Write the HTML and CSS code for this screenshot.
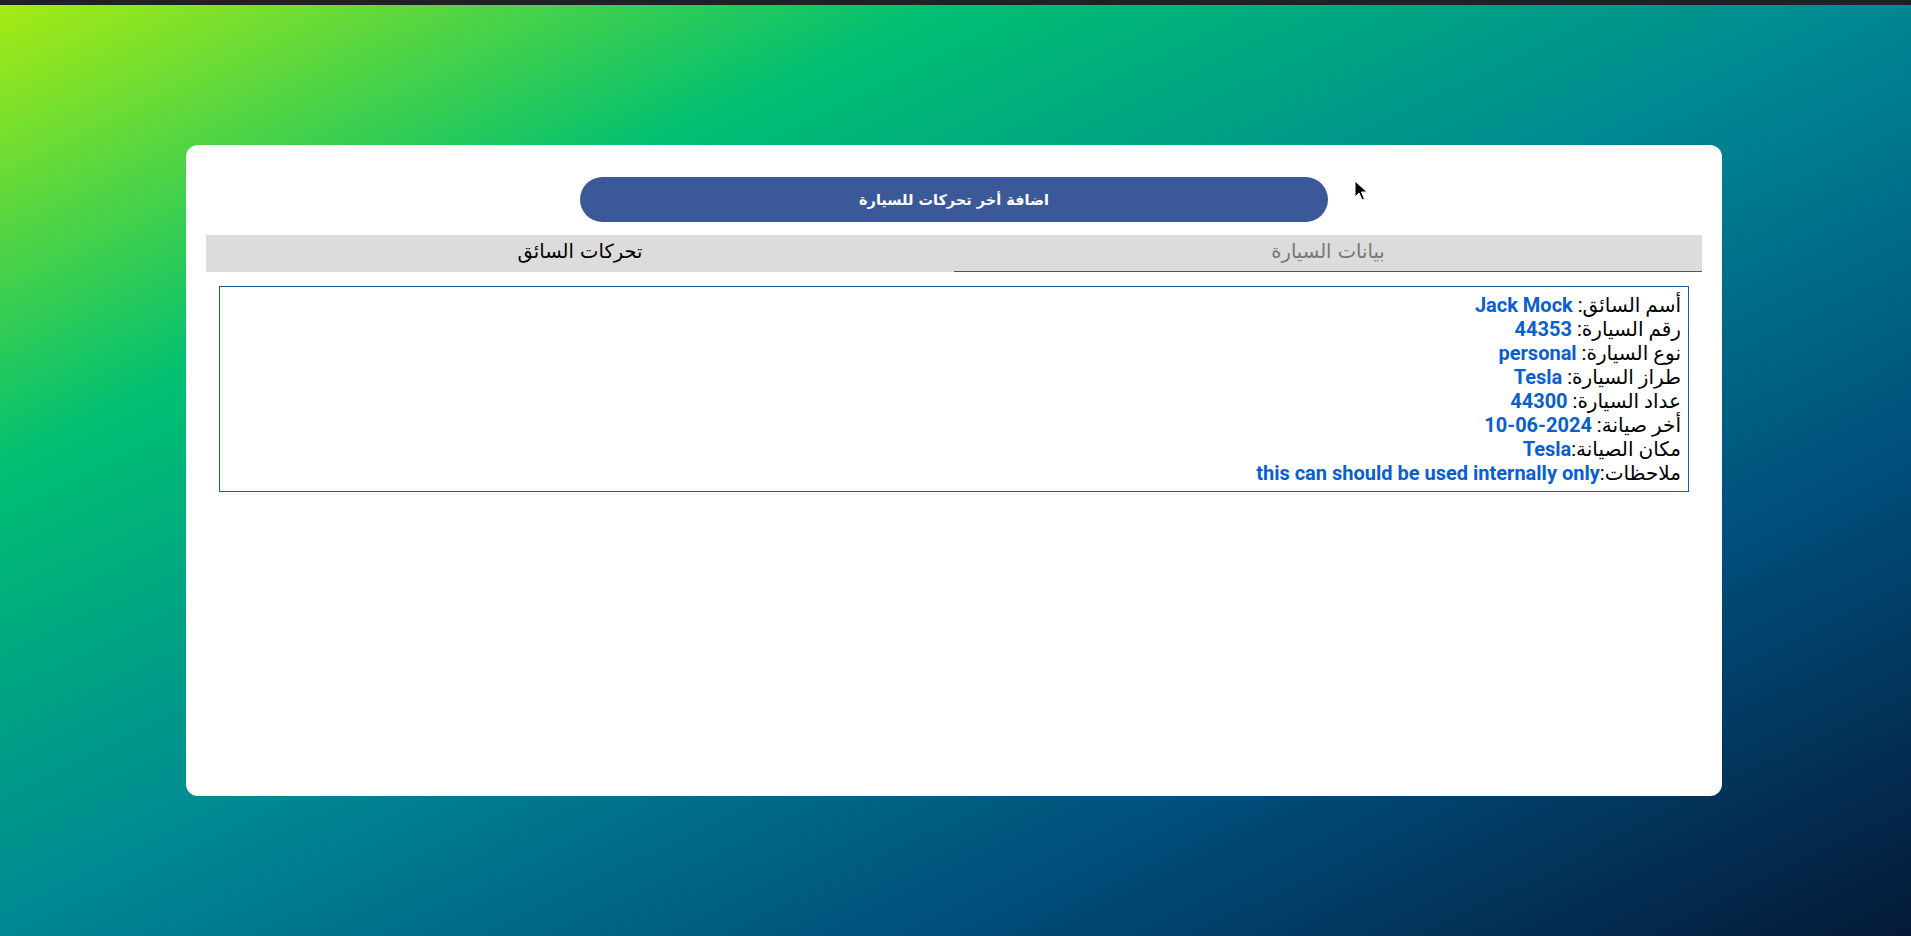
FILE: index.html
```html
<!DOCTYPE html>
<html lang="ar" dir="rtl">
<head>
<meta charset="utf-8">
<title>بيانات السيارة</title>
<link rel="stylesheet" href="styles.css">
</head>
<body>
<div class="topbar"></div>
<main class="page">
  <section class="card">
    <div class="actions">
      <button class="add-btn">اضافة أخر تحركات للسيارة</button>
    </div>
    <nav class="tabs">
      <div class="tab active">بيانات السيارة</div>
      <div class="tab">تحركات السائق</div>
    </nav>
    <div class="info">
      <div class="row">أسم السائق: <b>Jack Mock</b></div>
      <div class="row">رقم السيارة: <b>44353</b></div>
      <div class="row">نوع السيارة: <b>personal</b></div>
      <div class="row">طراز السيارة: <b>Tesla</b></div>
      <div class="row">عداد السيارة: <b>44300</b></div>
      <div class="row">أخر صيانة: <b>2024-06-10</b></div>
      <div class="row">مكان الصيانة:<b>Tesla</b></div>
      <div class="row">ملاحظات:<b>this can should be used internally only</b></div>
    </div>
  </section>
  <svg class="cursor" width="14" height="22" viewBox="0 0 14 22"><path d="M1 1 L1 17 L5 13 L8 20 L10.5 19 L7.5 12 L13 12 Z" fill="#000" stroke="#fff" stroke-width="1"/></svg>
</main>
</body>
</html>
```
FILE: styles.css
```css
html, body {
  margin: 0;
  padding: 0;
  height: 100%;
}
body {
  font-family: Roboto, "DejaVu Sans", sans-serif;
  background: linear-gradient(to left top, #051937, #004d7a, #008793, #00bf72, #a8eb12);
  min-height: 936px;
  overflow: hidden;
}
.topbar {
  height: 5px;
  background: #202124;
}
.page {
  position: relative;
  padding-top: 140px;
}
.card {
  width: 1536px;
  height: 651px;
  box-sizing: border-box;
  margin: 0 auto 0 186px;
  background: #fff;
  border-radius: 12px;
  padding: 32px 20px 20px;
}
.actions {
  display: flex;
  justify-content: center;
}
.add-btn {
  width: 748px;
  height: 45px;
  border: none;
  border-radius: 23px;
  background: #3b5998;
  color: #fff;
  font-family: "DejaVu Sans", sans-serif;
  font-weight: bold;
  font-size: 14.5px;
}
.tabs {
  display: flex;
  margin-top: 13px;
  background: #dcdcdc;
  height: 37px;
}
.tab {
  flex: 1;
  text-align: center;
  font-family: "DejaVu Sans", sans-serif;
  font-size: 19.5px;
  line-height: 34px;
  color: #000;
  box-sizing: border-box;
}
.tab.active {
  color: #777;
  border-bottom: 1px solid #4a4aa8;
}
.info {
  margin: 14px 13px 0;
  border: 1px solid #1d5c99;
  padding: 6px 7px 6px;
  font-size: 20px;
  line-height: 24px;
  color: #000;
}
.row {
  height: 24px;
}
.info b {
  font-family: Roboto, sans-serif;
  font-weight: bold;
  font-size: 20px;
  line-height: 1;
  color: #0a5fcf;
}
.cursor {
  position: absolute;
  left: 1354px;
  top: 175px;
}
```
